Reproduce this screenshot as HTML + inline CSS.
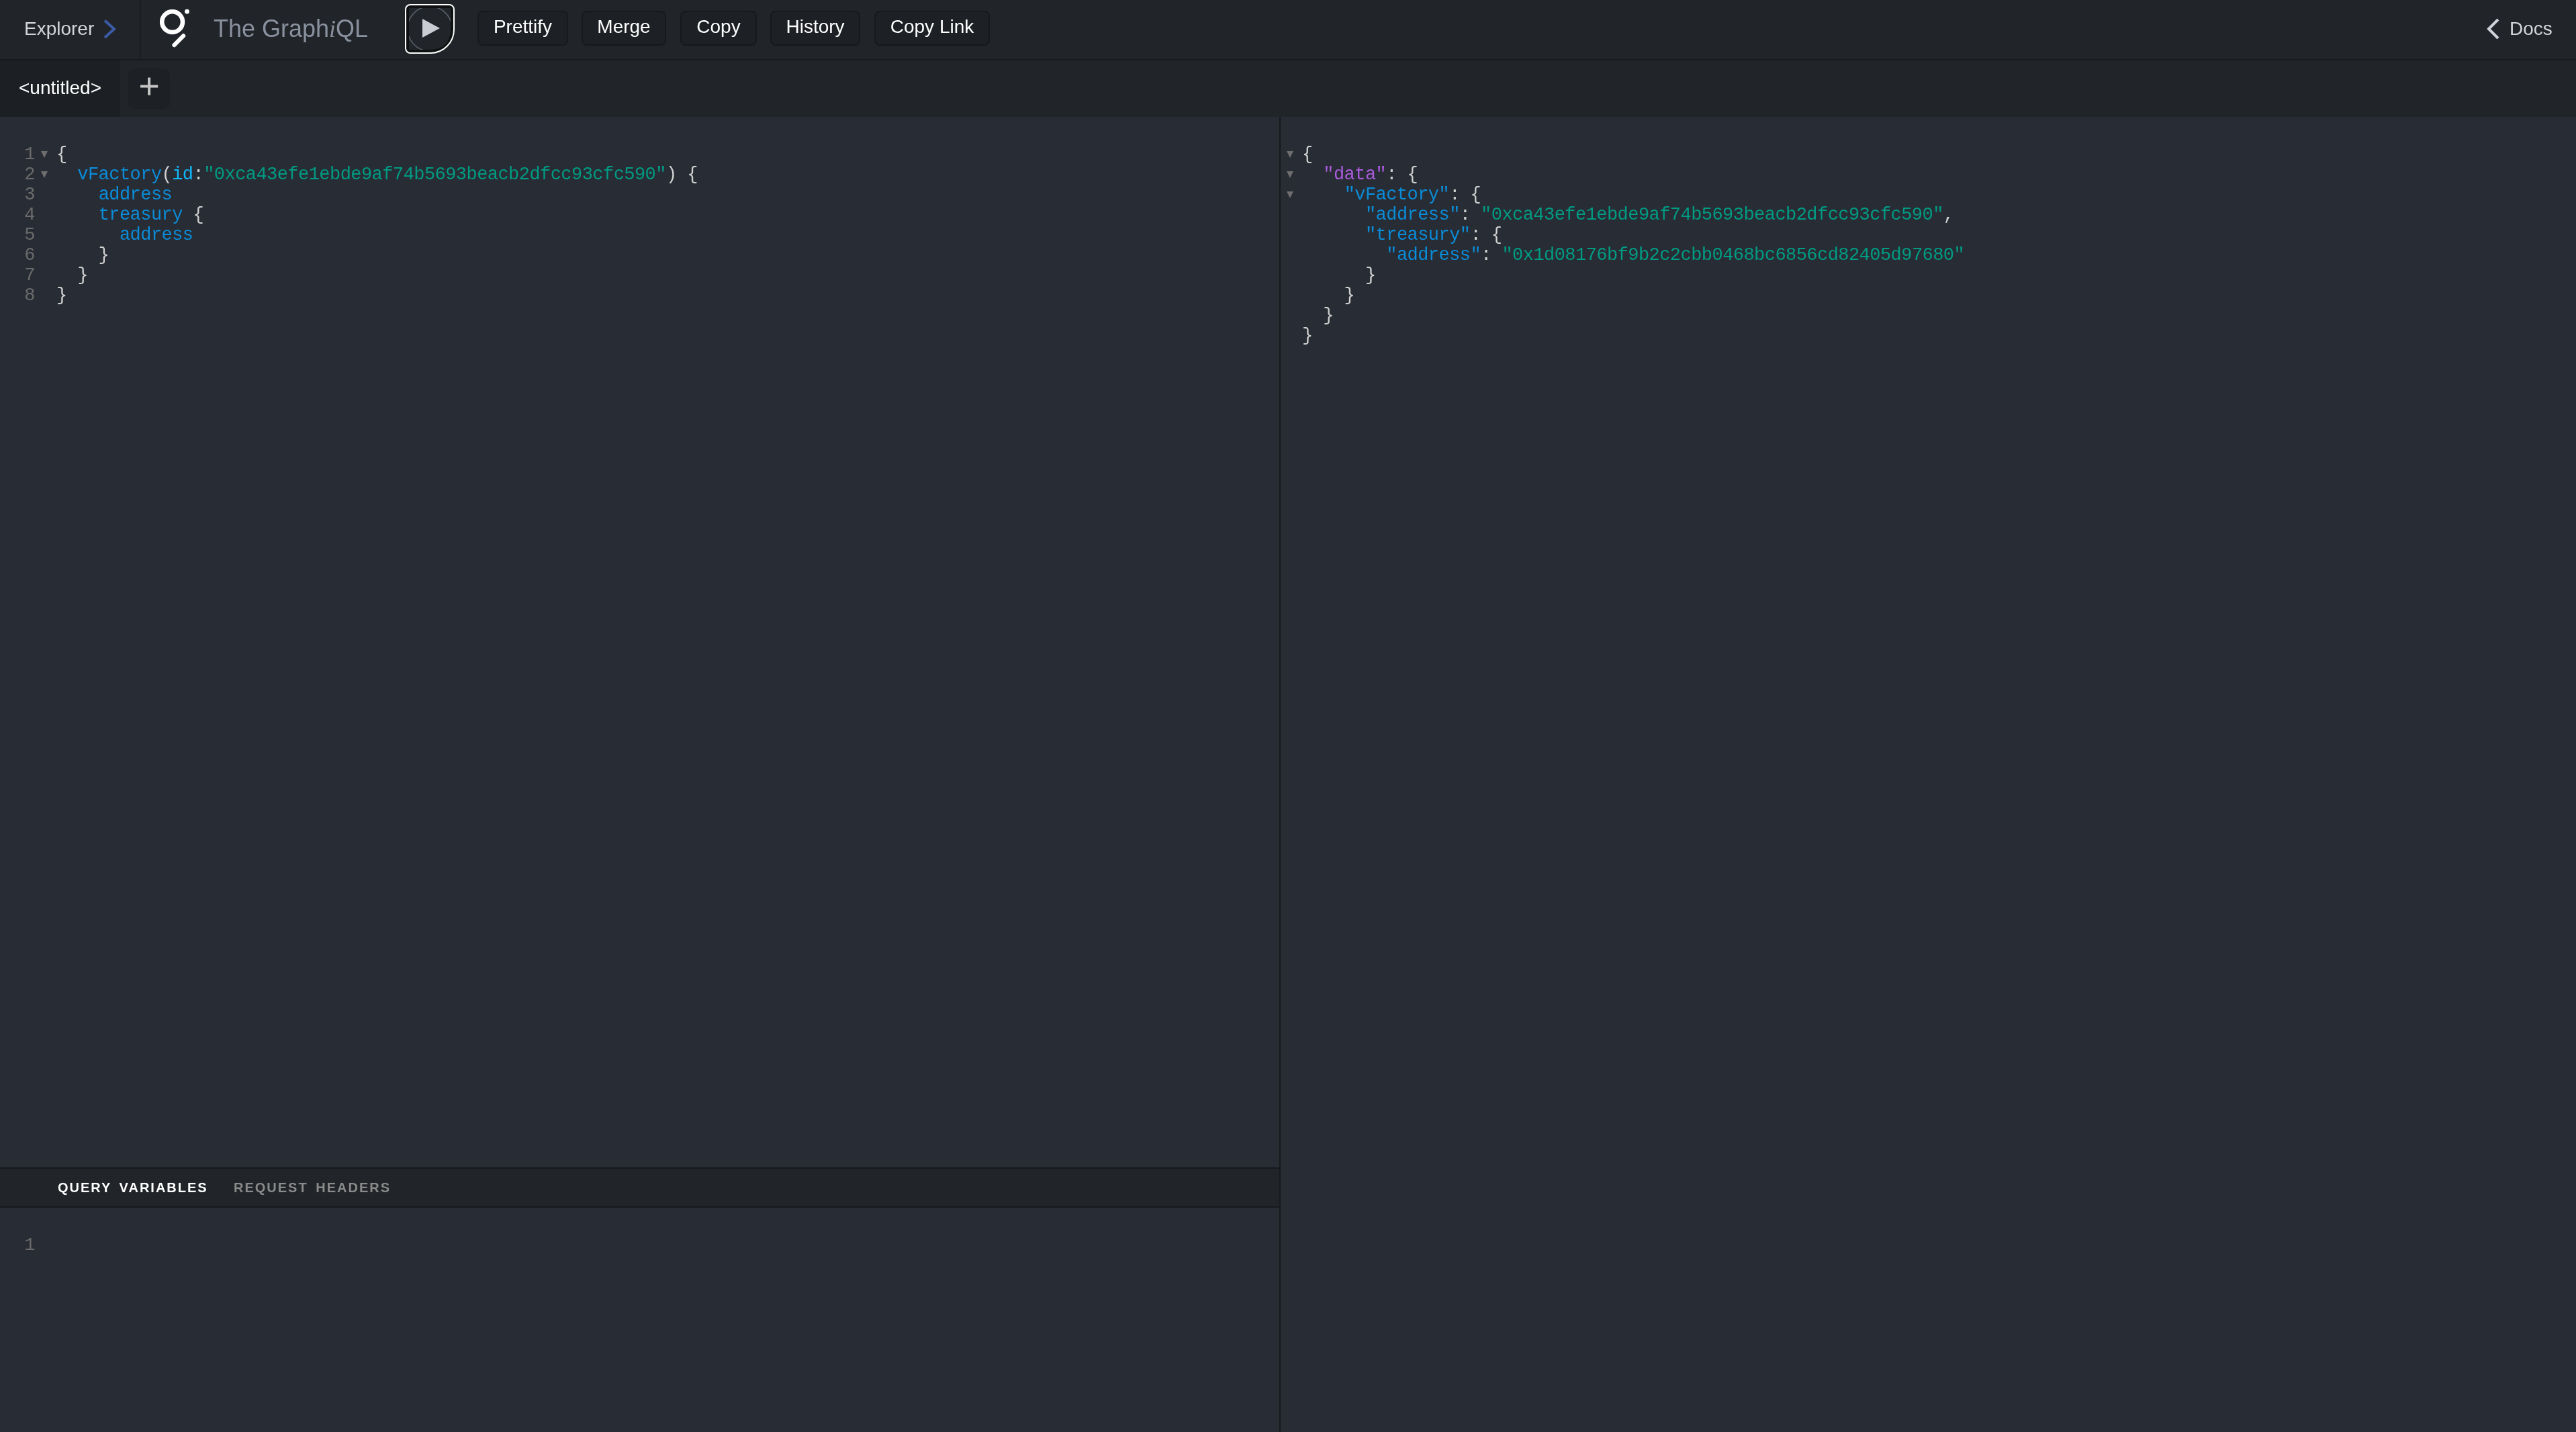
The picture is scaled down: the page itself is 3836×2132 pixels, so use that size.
<!DOCTYPE html>
<html><head><meta charset="utf-8">
<style>
*{box-sizing:border-box;margin:0;padding:0}
html,body{width:3836px;height:2132px;overflow:hidden;background:#282c34;font-family:"Liberation Sans",sans-serif}
.abs,.btn{will-change:transform}
.abs{position:absolute}
#top{left:0;top:0;width:3836px;height:88px;background:#212529}
#topb{left:0;top:88px;width:3836px;height:2px;background:#17191c}
#expsep{left:208px;top:0;width:2px;height:88px;background:#1b1e21}
.t28{font-size:28px;line-height:1;white-space:nowrap}
#explorer{left:36px;top:29px;color:#d3d5db}
#logotxt{left:318px;top:25px;font-size:36px;color:#8a919e;white-space:nowrap;line-height:1}
#logotxt i{font-family:"Liberation Serif",serif}
.btn{position:absolute;top:16px;height:52px;background:#1d2024;border:2px solid #17191c;border-radius:8px;color:#fff;font-size:28px;line-height:44px;text-align:center;white-space:nowrap}
#tabs{left:0;top:90px;width:3836px;height:84px;background:#212529}
#tab1{left:0;top:90px;width:179px;height:84px;background:#1c1f23;color:#fff;font-size:28px;line-height:82px;padding-left:28px;white-space:nowrap}
#plus{left:191px;top:102px;width:62px;height:60px;background:#1d2024;border-radius:10px}
#divider{left:1905px;top:174px;width:2px;height:1958px;background:#17191c}
#varhdr{left:0;top:1738px;width:1905px;height:60px;background:#212529;border-top:2px solid #17191c;border-bottom:2px solid #17191c}
.vtab{position:absolute;top:0;font-size:20px;font-weight:bold;letter-spacing:2px;word-spacing:4px;line-height:56px;white-space:nowrap}
.code{font-family:"Liberation Mono",monospace;font-size:27px;letter-spacing:-0.55px;line-height:30px;white-space:pre;color:#d0d0d0}
.ln{color:#6b6b6b}
.fold{color:#6b6b6b}
.p{color:#0b8cd8}
.a{color:#12b7f7}
.s{color:#009b83}
.k{color:#a95bdb}
</style></head><body>
<div id="top" class="abs"></div>
<div id="topb" class="abs"></div>
<div id="expsep" class="abs"></div>
<div id="explorer" class="abs t28">Explorer</div>
<svg class="abs" style="left:150px;top:24px" width="28" height="38" viewBox="0 0 28 38"><polyline points="6,6.5 20,19.2 6,32" fill="none" stroke="#3c5aa6" stroke-width="4"/></svg>
<svg class="abs" style="left:230px;top:8px" width="60" height="66" viewBox="0 0 60 66"><circle cx="26.6" cy="24.6" r="15.4" fill="none" stroke="#fff" stroke-width="6.6"/><circle cx="48.5" cy="9.2" r="3.4" fill="#fff"/><line x1="43.1" y1="45.4" x2="29.5" y2="59.1" stroke="#fff" stroke-width="6.2" stroke-linecap="round"/></svg>
<div id="logotxt" class="abs">The Graph<i>i</i>QL</div>
<div class="abs" style="left:603px;top:6px;width:74px;height:74px;border:2px solid #fff;border-radius:8px 8px 36px 8px;background:#0f1011"></div>
<div class="abs" style="left:609px;top:12px;width:62px;height:62px;overflow:hidden;background:#212529;border-radius:0 0 28px 0"><svg width="62" height="62" viewBox="0 0 62 62" style="display:block"><circle cx="31" cy="30.8" r="33.2" fill="none" stroke="#5b626d" stroke-width="1.6"/><polygon points="20,16 46,30 20,44" fill="#c9ccd3"/></svg></div>
<div class="btn" style="left:711px;width:135px">Prettify</div>
<div class="btn" style="left:866px;width:126px">Merge</div>
<div class="btn" style="left:1013px;width:114px">Copy</div>
<div class="btn" style="left:1147px;width:134px">History</div>
<div class="btn" style="left:1302px;width:172px">Copy Link</div>
<svg class="abs" style="left:3698px;top:24px" width="30" height="40" viewBox="0 0 30 40"><polyline points="22,5 8,19 22,33" fill="none" stroke="#d0d3da" stroke-width="4"/></svg>
<div class="abs t28" style="left:3736.5px;top:29px;color:#d3d5db">Docs</div>

<div id="tabs" class="abs"></div>
<div id="tab1" class="abs">&lt;untitled&gt;</div>
<div id="plus" class="abs"></div>
<svg class="abs" style="left:192px;top:102px" width="61" height="60" viewBox="0 0 61 60"><path d="M30.1 13.5 V39.7 M17 26.6 H43.2" stroke="#c6c6c6" stroke-width="4"/></svg>

<div id="divider" class="abs"></div>
<div id="varhdr" class="abs">
<div class="vtab" style="left:86px;color:#fff">QUERY VARIABLES</div>
<div class="vtab" style="left:348px;color:#8a8a8a">REQUEST HEADERS</div>
</div>

<div class="abs code ln" style="left:0;top:215px;width:52px;text-align:right">1
2
3
4
5
6
7
8</div>
<svg class="abs" style="left:0;top:0" width="1905" height="400"><g fill="#6e6e6e"><polygon points="61,225 71,225 66,235"/><polygon points="61,255 71,255 66,265"/></g></svg>
<div class="abs code" style="left:84px;top:215px">{
  <span class="p">vFactory</span>(<span class="a">id</span>:<span class="s">"0xca43efe1ebde9af74b5693beacb2dfcc93cfc590"</span>) {
    <span class="p">address</span>
    <span class="p">treasury</span> {
      <span class="p">address</span>
    }
  }
}</div>
<svg class="abs" style="left:1907px;top:0" width="100" height="400"><g fill="#6e6e6e"><polygon points="9,225 19,225 14,235"/><polygon points="9,255 19,255 14,265"/><polygon points="9,285 19,285 14,295"/></g></svg>
<div class="abs code" style="left:1939px;top:215px">{
  <span class="k">"data"</span>: {
    <span class="p">"vFactory"</span>: {
      <span class="p">"address"</span>: <span class="s">"0xca43efe1ebde9af74b5693beacb2dfcc93cfc590"</span>,
      <span class="p">"treasury"</span>: {
        <span class="p">"address"</span>: <span class="s">"0x1d08176bf9b2c2cbb0468bc6856cd82405d97680"</span>
      }
    }
  }
}</div>
<div class="abs code ln" style="left:0;top:1839px;width:52px;text-align:right">1</div>
</body></html>
